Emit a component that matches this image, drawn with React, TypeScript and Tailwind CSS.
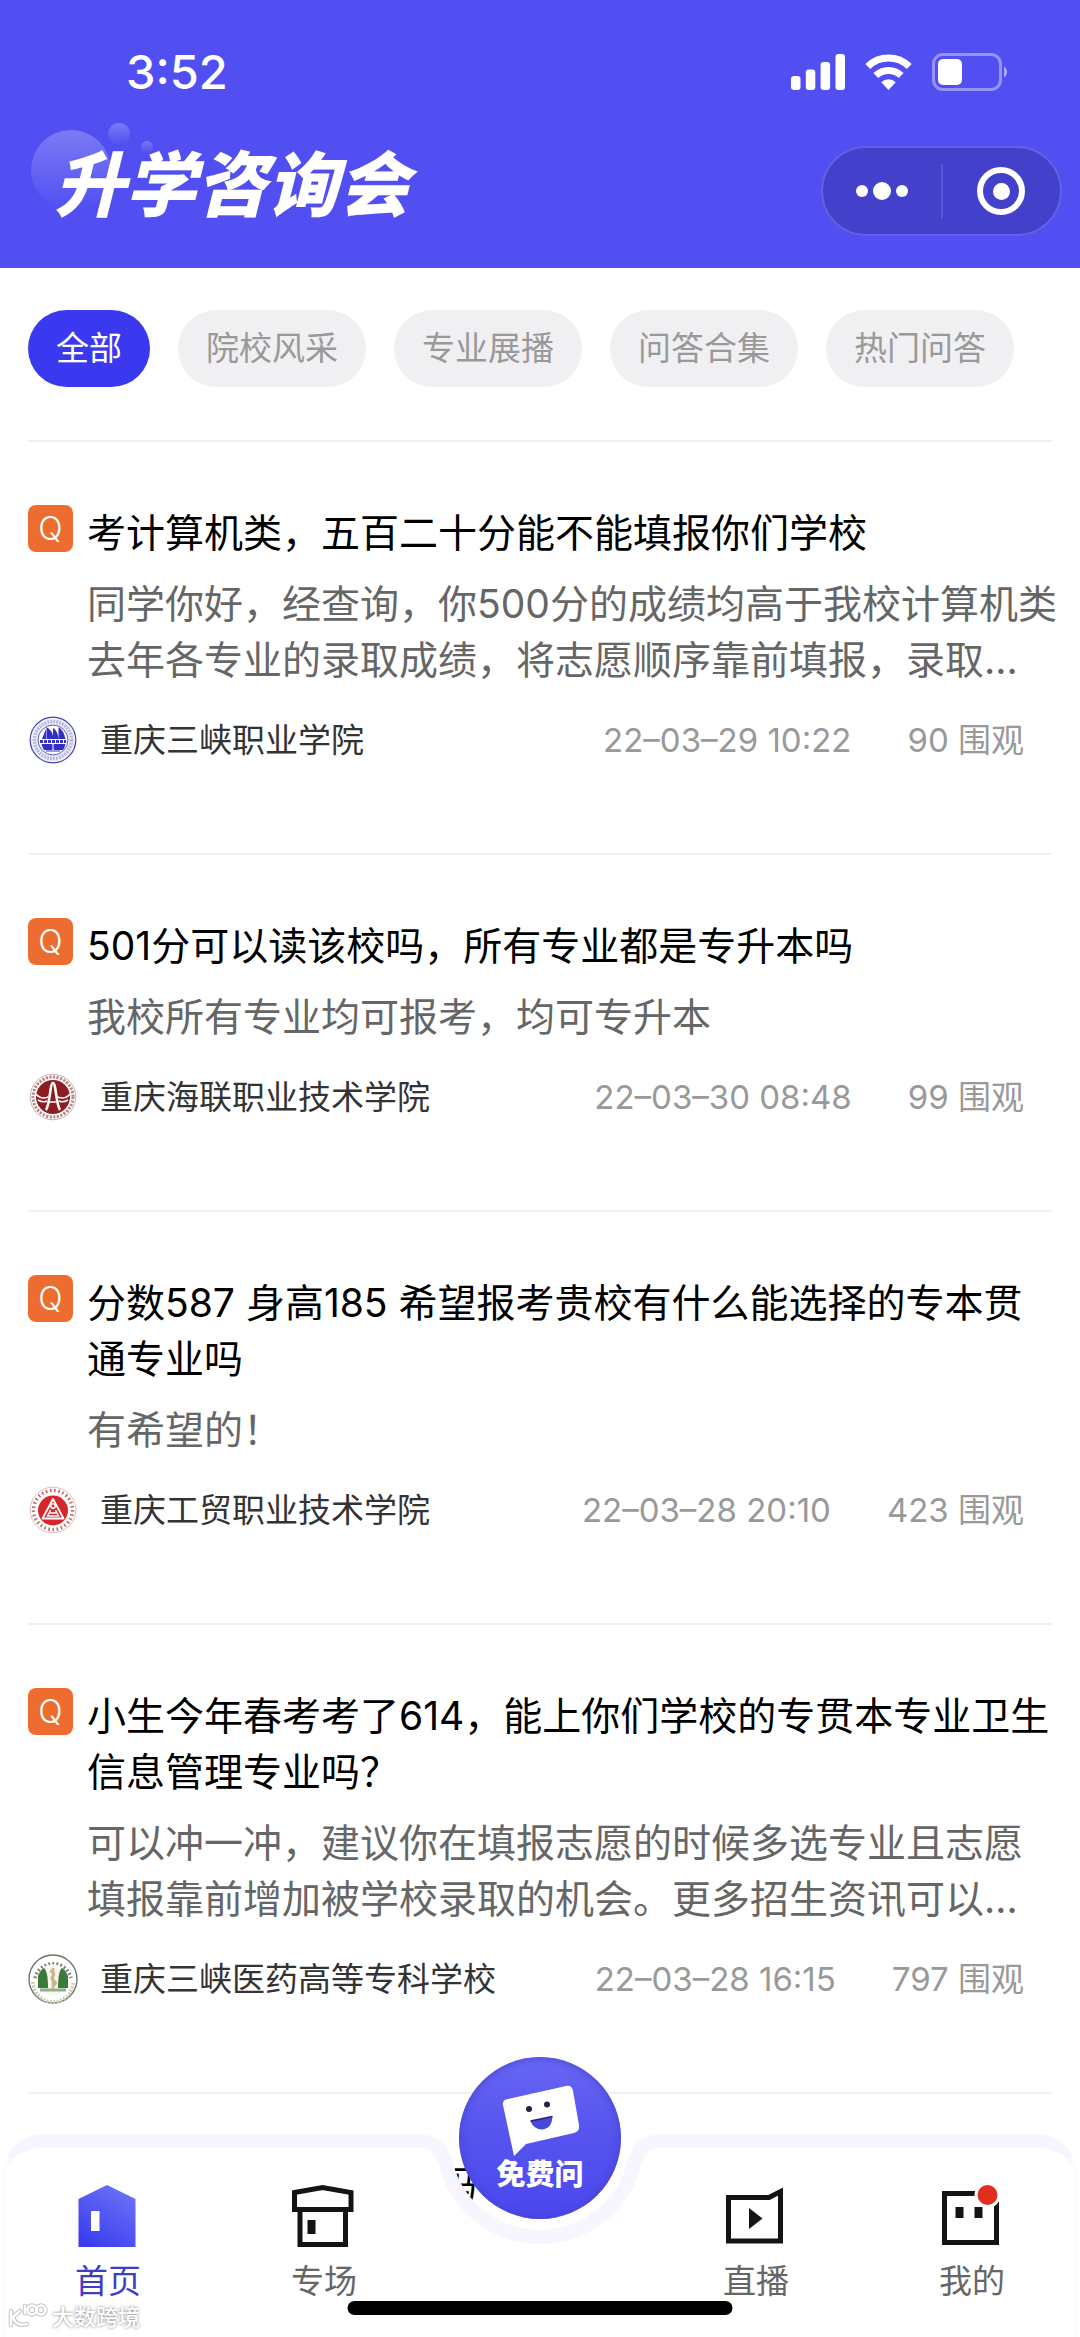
import type { ComponentType } from "react";

const topics = ["全部", "院校风采", "专业展播", "问答合集", "热门问答"];

type Reply = {
  answer: string;
  school: string;
  seal: ComponentType;
  date: string;
  views: number;
};

const questions: { title: string; reply?: Reply }[] = [
  {
    title: "考计算机类，五百二十分能不能填报你们学校",
    reply: {
      answer: "同学你好，经查询，你500分的成绩均高于我校计算机类去年各专业的录取成绩，将志愿顺序靠前填报，录取…",
      school: "重庆三峡职业学院",
      seal: SailSeal,
      date: "22–03–29 10:22",
      views: 90,
    },
  },
  {
    title: "501分可以读该校吗，所有专业都是专升本吗",
    reply: {
      answer: "我校所有专业均可报考，均可专升本",
      school: "重庆海联职业技术学院",
      seal: ArchSeal,
      date: "22–03–30 08:48",
      views: 99,
    },
  },
  {
    title: "分数587 身高185 希望报考贵校有什么能选择的专本贯通专业吗",
    reply: {
      answer: "有希望的！",
      school: "重庆工贸职业技术学院",
      seal: TriangleSeal,
      date: "22–03–28 20:10",
      views: 423,
    },
  },
  {
    title: "小生今年春考考了614，能上你们学校的专贯本专业卫生信息管理专业吗？",
    reply: {
      answer: "可以冲一冲，建议你在填报志愿的时候多选专业且志愿填报靠前增加被学校录取的机会。更多招生资讯可以…",
      school: "重庆三峡医药高等专科学校",
      seal: MedicalSeal,
      date: "22–03–28 16:15",
      views: 797,
    },
  },
  { title: "请问今年可以专升本吗" },
];

export default function App() {
  return (
    <div className="relative flex h-screen flex-col overflow-hidden bg-white font-[Inter,'Noto_Sans_CJK_SC',sans-serif]">
      <Header />
      <main className="min-h-0 flex-1 overflow-y-auto pt-[42px] [scrollbar-width:none]">
        <div className="flex gap-7 px-7">
          {topics.map((topic, i) => (
            <button
              key={topic}
              className={
                i === 0
                  ? "h-[77px] shrink-0 rounded-full bg-[#3b39f0] px-7 text-[33px] text-white"
                  : "h-[77px] shrink-0 rounded-full bg-[#f0f0f2] px-7 text-[33px] text-[#999999]"
              }
            >
              {topic}
            </button>
          ))}
        </div>
        <div className="mt-[53px]">
          {questions.map((q) => (
            <Question key={q.title} {...q} />
          ))}
        </div>
      </main>
      <BottomNav />
    </div>
  );
}

function Header() {
  return (
    <header className="shrink-0 bg-[#514ff1] text-white">
      <div className="flex h-36 items-center justify-between pr-[72px] pl-[126px]">
        <span className="text-[47px] font-medium">3:52</span>
        <div className="flex items-center gap-5">
          <svg width="54" height="36" viewBox="0 0 54 36" fill="currentColor">
            <rect y="22" width="9.5" height="14" rx="3" />
            <rect x="14.8" y="15.5" width="9.5" height="20.5" rx="3" />
            <rect x="29.6" y="8" width="9.5" height="28" rx="3" />
            <rect x="44.5" width="9.5" height="36" rx="3" />
          </svg>
          <svg width="47" height="36" viewBox="0 0 47 36" fill="none" stroke="currentColor" strokeWidth="7">
            <path d="M2.8 12.5A29.5 29.5 0 0 1 44.2 12.5" />
            <path d="M10.8 21.5A18.5 18.5 0 0 1 36.2 21.5" />
            <path d="M23.5 36L16.3 28.2A10.5 10.5 0 0 1 30.7 28.2Z" fill="currentColor" stroke="none" />
          </svg>
          <svg width="76" height="38" viewBox="0 0 76 38" fill="none">
            <rect x="1.5" y="1.5" width="67" height="35" rx="9.5" stroke="#fff" strokeOpacity="0.4" strokeWidth="3" />
            <rect x="6" y="6" width="24" height="26" rx="5" fill="#fff" />
            <path d="M72 13.5a6.5 6.5 0 0 1 0 11z" fill="#fff" fillOpacity="0.5" />
          </svg>
        </div>
      </div>
      <div className="flex h-[124px] items-start justify-between pt-0.5 pr-[18px] pl-[30px]">
        <div className="relative pl-6">
          <svg className="absolute -top-6 left-0" width="130" height="100" viewBox="0 0 130 100">
            <defs>
              <linearGradient id="bubble" x1="0" y1="0" x2="0" y2="1">
                <stop stopColor="#7b7af6" />
                <stop offset="1" stopColor="#514ff1" />
              </linearGradient>
            </defs>
            <circle cx="41" cy="48" r="40" fill="url(#bubble)" />
            <circle cx="89" cy="12" r="11" fill="url(#bubble)" />
            <circle cx="117" cy="25" r="6" fill="url(#bubble)" />
          </svg>
          <h1 className="relative text-[71px] leading-[78px] font-black italic">升学咨询会</h1>
        </div>
        <div className="flex h-[90px] w-[241px] items-center rounded-full border-2 border-[#6361e2] bg-[#4341cb]">
          <button aria-label="更多" className="flex h-full flex-1 items-center justify-center gap-[5px]">
            <span className="size-3 rounded-full bg-white" />
            <span className="size-[18px] rounded-full bg-white" />
            <span className="size-3 rounded-full bg-white" />
          </button>
          <span className="h-[54px] w-0.5 bg-[#5a58d8]" />
          <button aria-label="关闭" className="flex h-full flex-1 items-center justify-center">
            <span className="flex size-12 items-center justify-center rounded-full border-[6px] border-white">
              <span className="size-[17px] rounded-full bg-white" />
            </span>
          </button>
        </div>
      </div>
    </header>
  );
}

function Question({ title, reply }: { title: string; reply?: Reply }) {
  return (
    <article className="relative pt-[65px] pr-5 pb-[88px] pl-7">
      <hr className="absolute top-0 right-7 left-7 border-t-2 border-[#f0f0f0]" />
      <div className="flex gap-3.5">
        <span className="flex h-[47px] w-[45px] shrink-0 items-center justify-center rounded-lg bg-[#ed6d30] text-[32px] font-light text-white">
          Q
        </span>
        <div className="text-[39px] leading-14">
          <h2 className="text-black">{title}</h2>
          {reply && <p className="mt-[15px] line-clamp-2 text-[#666666]">{reply.answer}</p>}
        </div>
      </div>
      {reply && (
        <footer className="mt-[27px] flex items-center pr-9 text-[33px] leading-[50px] text-[#999999]">
          <reply.seal />
          <span className="ml-[22px] flex-1 text-[#333333]">{reply.school}</span>
          <time>{reply.date}</time>
          <span className="ml-14">{reply.views} 围观</span>
        </footer>
      )}
    </article>
  );
}

function SailSeal() {
  return (
    <svg width="50" height="50" viewBox="0 0 50 50" className="shrink-0">
      <circle cx="25" cy="25" r="22.8" fill="#eeeef9" stroke="#4644b4" strokeWidth="1.2" />
      <circle cx="25" cy="25" r="18.5" fill="none" stroke="#b5b4e0" strokeWidth="3.5" strokeDasharray="1.8 1.2" />
      <circle cx="25" cy="25" r="15" fill="#fff" stroke="#5a58c4" strokeWidth="1" />
      <path d="M14 24l4-10v10zM18.500 24V12q6 3 7 12zM25 24V13q5 3 5.500 11V12q5 3 7 12z" fill="#2f2ec8" />
      <path d="M12 26.500h26" stroke="#3634b8" strokeWidth="3" strokeDasharray="3 1" />
      <path d="M14 29.500h10v5h-8zM26 29.500h11l-2 5h-9zM18 36h14" fill="#2f2ec8" stroke="#2f2ec8" />
    </svg>
  );
}

function ArchSeal() {
  return (
    <svg width="50" height="50" viewBox="0 0 50 50" className="shrink-0" fill="none">
      <circle cx="25" cy="25" r="22.8" fill="#fff" stroke="#c9b0b0" />
      <circle cx="25" cy="25" r="20" stroke="#b98486" strokeWidth="3" strokeDasharray="2.2 1.4" />
      <circle cx="25" cy="25" r="17" fill="#8e1d22" />
      <path d="M18 38C22 32 22 11 25 11s3 21 7 27" stroke="#fff" strokeWidth="2.6" />
      <path d="M8 22q5 6 12 3M42 22q-5 6-12 3M10 28q5 3 9 1M40 28q-5 3-9 1M21 30h8" stroke="#fff" strokeWidth="1.6" />
    </svg>
  );
}

function TriangleSeal() {
  return (
    <svg width="50" height="50" viewBox="0 0 50 50" className="shrink-0" fill="none">
      <circle cx="25" cy="25" r="22.8" fill="#fff" stroke="#dcbcbc" />
      <circle cx="25" cy="25" r="19.5" stroke="#c4686a" strokeWidth="3.5" strokeDasharray="1.6 2.6" />
      <circle cx="25" cy="25.5" r="15" fill="#d6262b" />
      <path d="M25 14L14.500 33.500h21z" stroke="#fff" strokeWidth="1.8" strokeLinejoin="round" />
      <circle cx="25" cy="21" r="2.2" stroke="#fff" strokeWidth="1.5" />
      <path d="M22.500 25l-3 6h11l-3-6M21 28h8" stroke="#fff" strokeWidth="1.5" />
    </svg>
  );
}

function MedicalSeal() {
  return (
    <svg width="50" height="50" viewBox="0 0 50 50" className="shrink-0" fill="none">
      <circle cx="25" cy="25" r="24" fill="#fff" stroke="#6b7468" strokeWidth="1.4" />
      <path d="M7 24A18.500 18.500 0 0 1 43 24" stroke="#7b7f78" strokeWidth="3.5" strokeDasharray="1.8 2.2" />
      <path d="M5 28a20 20 0 0 0 40 0" stroke="#c6cfae" strokeWidth="3.5" strokeDasharray="2 1.5" />
      <circle cx="25" cy="26" r="15.5" fill="#f6f7ef" />
      <path d="M10 34V22q3-7 6-8q4 3 4 20zM40 34V22q-3-7-6-8q-4 3-4 20z" fill="#3c7a3a" />
      <path d="M12 36h26" stroke="#8fb090" strokeWidth="3" />
      <path d="M25 14v21M22 17q6 2 3 5t1 5-1 5" stroke="#cdb48a" strokeWidth="2.6" />
    </svg>
  );
}

function BottomNav() {
  return (
    <nav className="absolute inset-x-0 bottom-0 h-[203px]">
      {/* Bar background with the notch for the round button */}
      <div className="absolute inset-0 flex px-[3px]">
        <div className="flex-1 rounded-tl-[40px] border-t-[14px] border-l-[3px] border-[#f7f6fe] border-l-[#fbfbff] bg-white" />
        <svg width="242" height="203" viewBox="0 0 242 203" fill="none" className="shrink-0">
          <path d="M0 7C12 7 22 12 27 30A97 97 0 0 0 215 30C220 12 230 7 242 7V203H0Z" fill="#fff" />
          <path d="M0 7C12 7 22 12 27 30A97 97 0 0 0 215 30C220 12 230 7 242 7" stroke="#f7f6fe" strokeWidth="14" />
        </svg>
        <div className="flex-1 rounded-tr-[40px] border-t-[14px] border-r-[3px] border-[#f7f6fe] border-r-[#fbfbff] bg-white" />
      </div>

      <div className="relative grid h-full grid-cols-5 pt-[50px]">
        <NavTab label="首页" icon={HomeIcon} active />
        <NavTab label="专场" icon={ShopIcon} />
        <div className="flex justify-center">
          <AskButton />
        </div>
        <NavTab label="直播" icon={LiveIcon} />
        <NavTab label="我的" icon={MineIcon} />
      </div>

      <div className="absolute bottom-[22px] left-1/2 h-3.5 w-[385px] -translate-x-1/2 rounded-full bg-black" />
      <Watermark />
    </nav>
  );
}

function NavTab({ label, icon: Icon, active }: { label: string; icon: ComponentType; active?: boolean }) {
  return (
    <a href="#" className="flex flex-col items-center">
      <Icon />
      <span
        className={
          active ? "mt-4 text-[33px] leading-[34px] text-[#3f3dc4]" : "mt-4 text-[33px] leading-[34px] text-[#666666]"
        }
      >
        {label}
      </span>
    </a>
  );
}

function AskButton() {
  return (
    <button className="absolute -top-[77px] flex size-[162px] flex-col items-center rounded-full bg-linear-to-b from-[#6866f4] via-[#5653ee] to-[#4a48ee] shadow-[inset_0_0_10px_#4341cb]">
      <svg width="160" height="104" viewBox="0 0 160 104" fill="none">
        <path
          d="M48 42L106 29Q112 28 113 34L119 68Q120 74 114 76L66 87L54 99L43 48Q42 43 48 42Z"
          fill="#fff"
        />
        <circle cx="69" cy="52" r="3" fill="#26243c" />
        <circle cx="87" cy="47.5" r="3" fill="#26243c" />
        <path d="M70.500 64L92.500 59.500Q92 71 83 72.500Q74 73 70.500 64Z" fill="#4a48d8" />
        <path d="M70.500 64L92.500 59.500" stroke="#26246c" strokeWidth="1.5" />
      </svg>
      <span className="text-[29px] leading-7 font-black text-white">免费问</span>
    </button>
  );
}

function HomeIcon() {
  return (
    <svg width="64" height="64" viewBox="0 0 64 64">
      <defs>
        <linearGradient id="house" x1="0.2" y1="1" x2="0.8" y2="0">
          <stop stopColor="#3a3ced" />
          <stop offset="1" stopColor="#6d72f8" />
        </linearGradient>
      </defs>
      <path d="M31 1L59.500 15V63H2.500V15Z" fill="url(#house)" />
      <rect x="15" y="27" width="8.5" height="20" fill="#fff" />
    </svg>
  );
}

function ShopIcon() {
  return (
    <svg width="64" height="64" viewBox="0 0 64 64" fill="none" stroke="#141414" strokeWidth="5">
      <path d="M2.500 8.500L30.500 3.500L59 8.500V25.500H2.500Z" />
      <path d="M8 26V60.500H53.500V26" />
      <rect x="15.5" y="36" width="8" height="14" fill="#141414" stroke="none" />
    </svg>
  );
}

function LiveIcon() {
  return (
    <svg width="64" height="64" viewBox="0 0 64 64" fill="none" stroke="#141414" strokeWidth="5">
      <path d="M4.500 13.500H45L56.500 7.500V57H4.500Z" />
      <path d="M25 24L38.500 34.500L25 45Z" fill="#141414" stroke="none" />
    </svg>
  );
}

function MineIcon() {
  return (
    <svg width="64" height="64" viewBox="0 0 64 64" fill="none">
      <path d="M4.500 9.500H56.500V58.500H4.500Z" stroke="#141414" strokeWidth="5" />
      <path d="M15.500 23h8v11h-8zM34.500 23h8v11h-8z" fill="#141414" />
      <circle cx="47.5" cy="11" r="11.5" fill="#e02f22" stroke="#fff" strokeWidth="3" />
    </svg>
  );
}

function Watermark() {
  return (
    <div className="absolute bottom-1.5 left-2 flex items-center gap-1 text-[22px] leading-7 font-medium text-white [text-shadow:0_0_3px_#777]">
      <svg width="40" height="28" viewBox="0 0 40 28" fill="none" strokeLinecap="round">
        <g stroke="#c4c4c4" strokeWidth="4.5">
          <path d="M3 8v14M12 8L5 14q3 10 14 7M17 10V3" />
          <circle cx="24" cy="7" r="4.5" />
          <circle cx="33" cy="7" r="4.5" />
        </g>
        <g stroke="#fff" strokeWidth="2.5">
          <path d="M3 8v14M12 8L5 14q3 10 14 7M17 10V3" />
          <circle cx="24" cy="7" r="4.5" />
          <circle cx="33" cy="7" r="4.5" />
        </g>
      </svg>
      大数跨境
    </div>
  );
}
